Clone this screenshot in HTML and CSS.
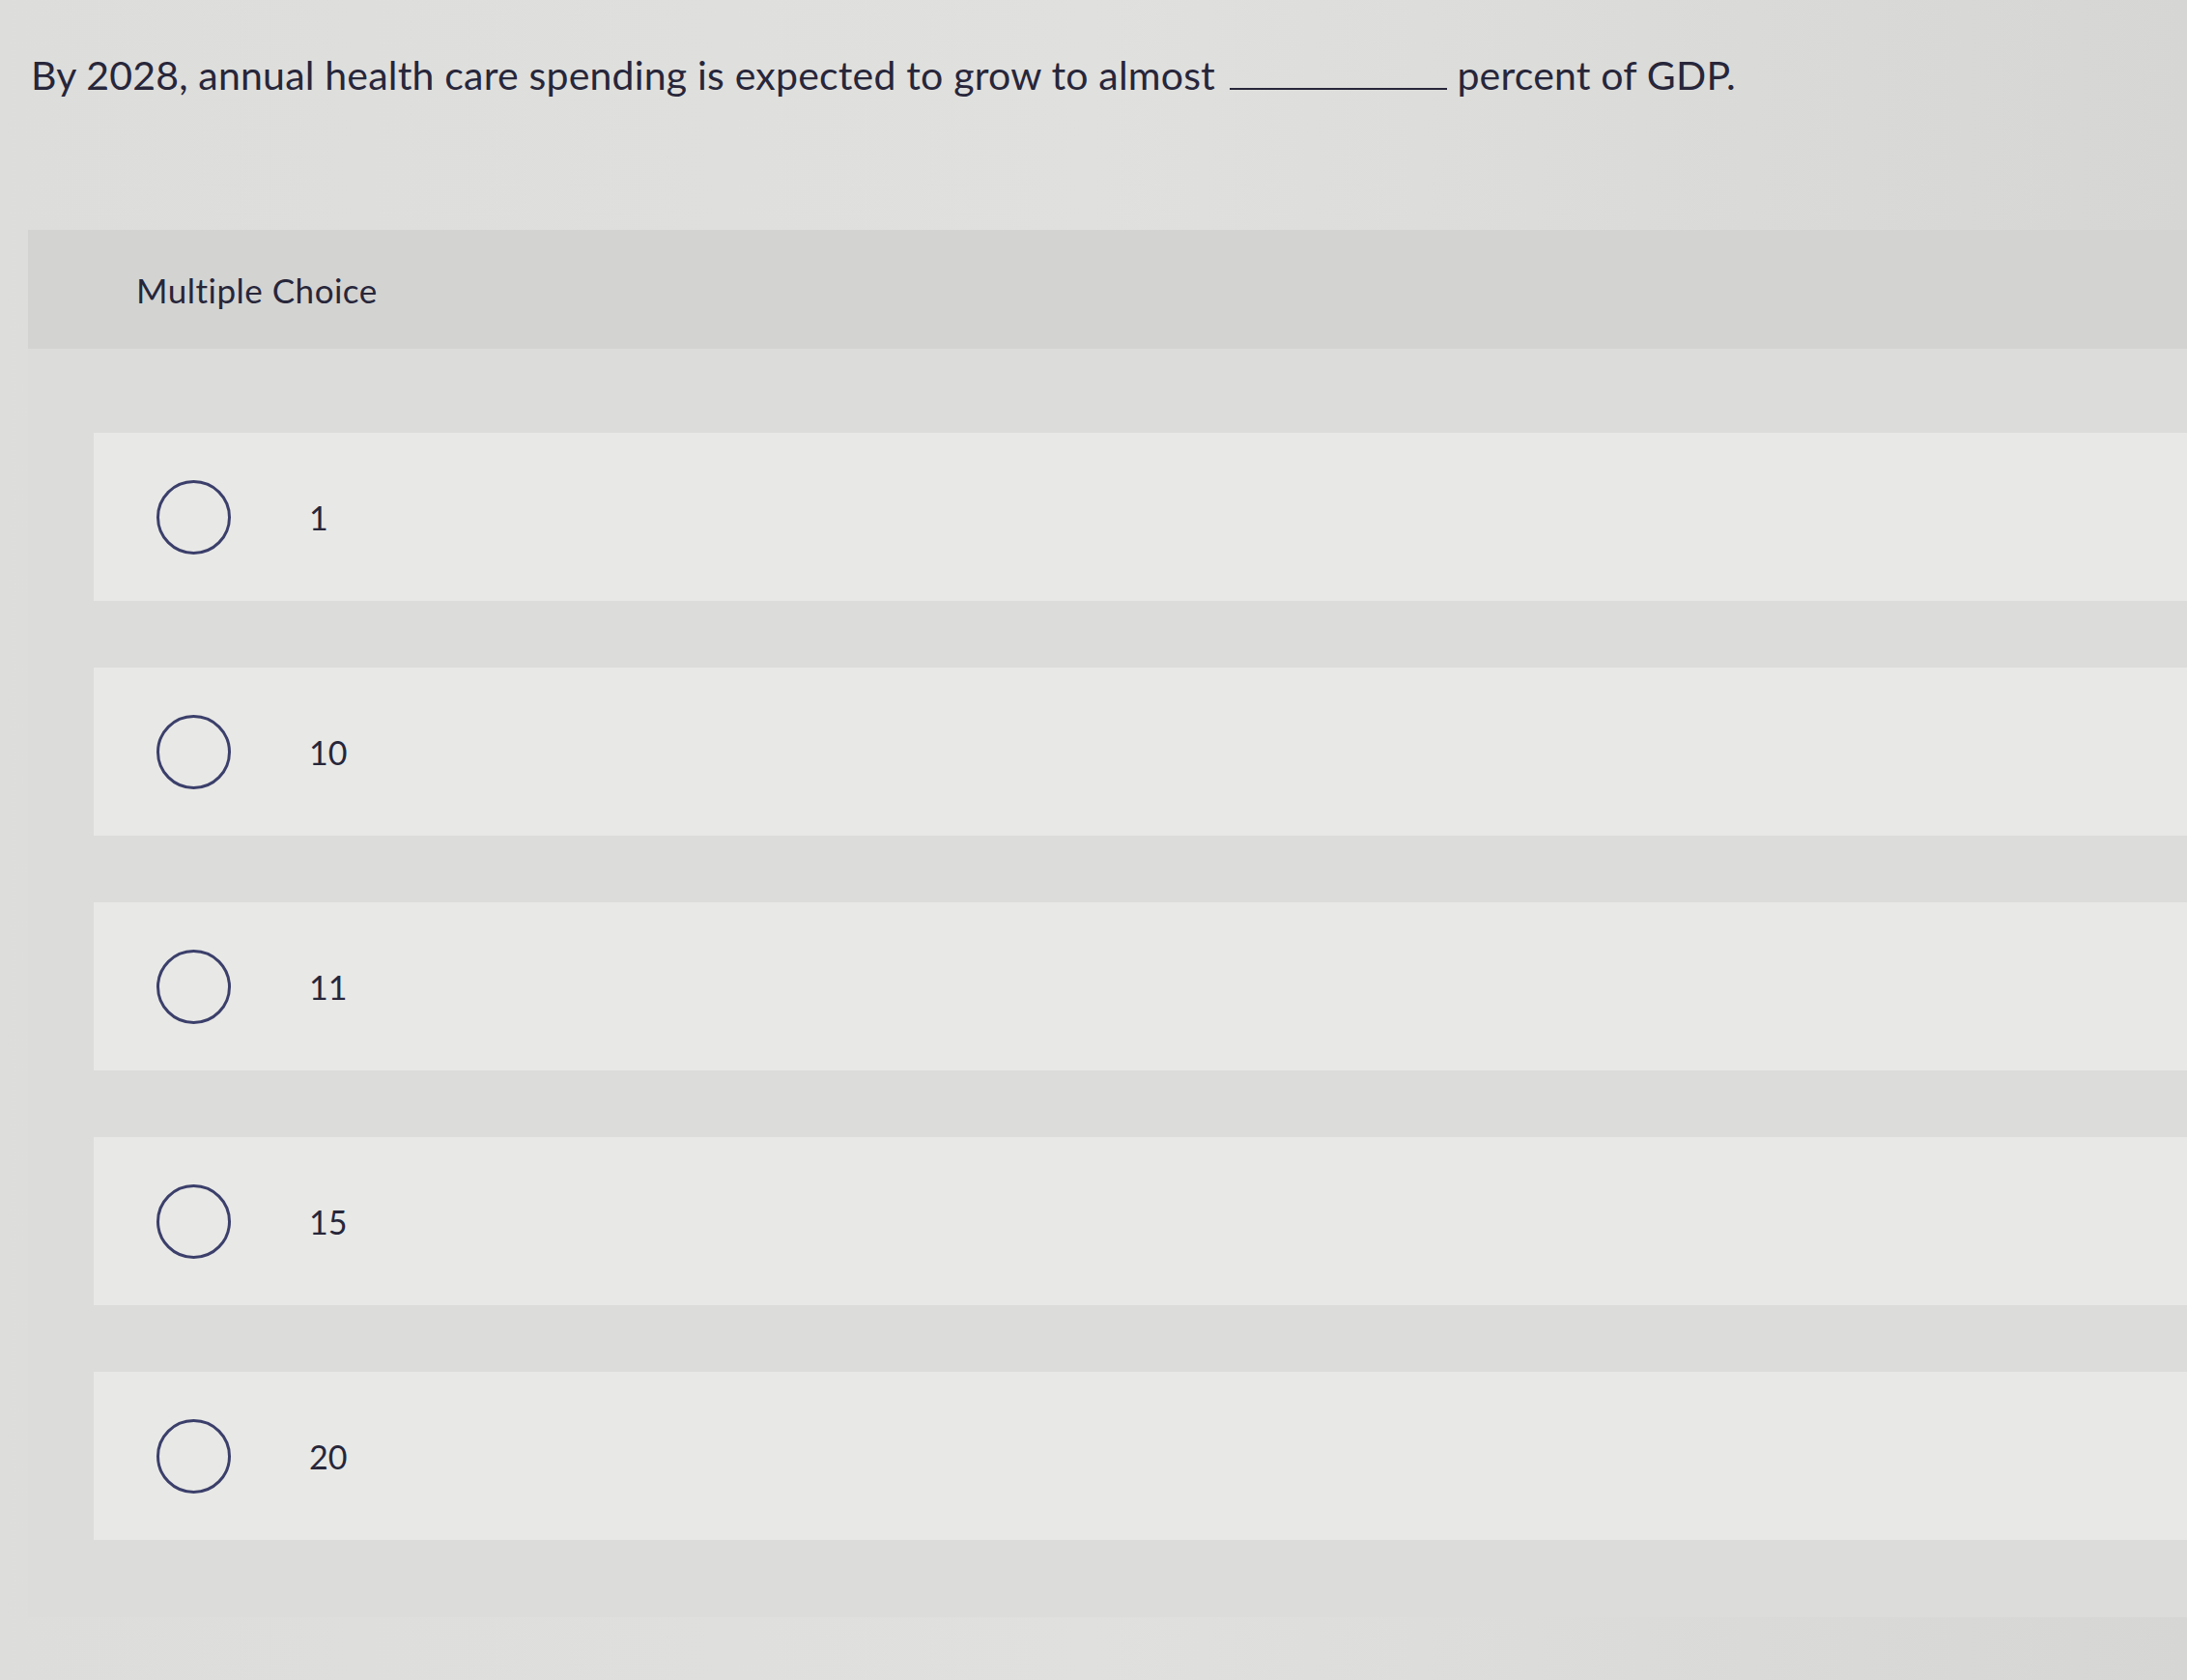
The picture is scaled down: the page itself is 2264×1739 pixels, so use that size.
FILE: index.html
```html
<!DOCTYPE html>
<html lang="en">
<head>
<meta charset="utf-8">
<title>Multiple Choice</title>
<link rel="stylesheet" href="styles.css">
</head>
<body>
<div class="page">
  <p class="question">By 2028, annual health care spending is expected to grow to almost <span class="blank"></span> percent of GDP.</p>
  <section class="panel">
    <div class="panel-head">Multiple Choice</div>
    <ul class="options">
      <li class="option"><span class="radio"></span><span class="label">1</span></li>
      <li class="option"><span class="radio"></span><span class="label">10</span></li>
      <li class="option"><span class="radio"></span><span class="label">11</span></li>
      <li class="option"><span class="radio"></span><span class="label">15</span></li>
      <li class="option"><span class="radio"></span><span class="label">20</span></li>
    </ul>
  </section>
</div>
</body>
</html>
```

FILE: styles.css
```css
html, body {
  margin: 0;
  padding: 0;
}
body {
  width: 2264px;
  height: 1739px;
  overflow: hidden;
  background: linear-gradient(90deg, #dddddb 0%, #e0e0de 50%, #d6d6d4 100%);
  font-family: Lato, "Open Sans", "Liberation Sans", sans-serif;
  color: #27263a;
}
.page {
  padding-top: 52px;
}
.question {
  margin: 0 0 0 32px;
  font-size: 41px;
  letter-spacing: 0.2px;
  line-height: 52px;
  white-space: nowrap;
}
.blank {
  display: inline-block;
  width: 225px;
  border-bottom: 2px solid #27263a;
  vertical-align: baseline;
  margin: 0 0 0 4px;
}
.panel {
  margin: 134px 0 0 29px;
  background: #dcdcdb;
  padding-bottom: 80px;
}
.panel-head {
  height: 123px;
  background: #d3d3d2;
  display: flex;
  align-items: center;
  padding-left: 112px;
  font-size: 35px;
  letter-spacing: 0.5px;
  box-sizing: border-box;
}
.options {
  list-style: none;
  margin: 87px 0 0 68px;
  padding: 0;
  display: flex;
  flex-direction: column;
  gap: 69px;
}
.option {
  height: 174px;
  background: #e8e8e6;
  display: flex;
  align-items: center;
  padding-left: 65px;
}
.radio {
  width: 71px;
  height: 71px;
  border: 3px solid #3b3f6a;
  border-radius: 50%;
  flex: none;
}
.label {
  margin-left: 81px;
  font-size: 34px;
}
```
